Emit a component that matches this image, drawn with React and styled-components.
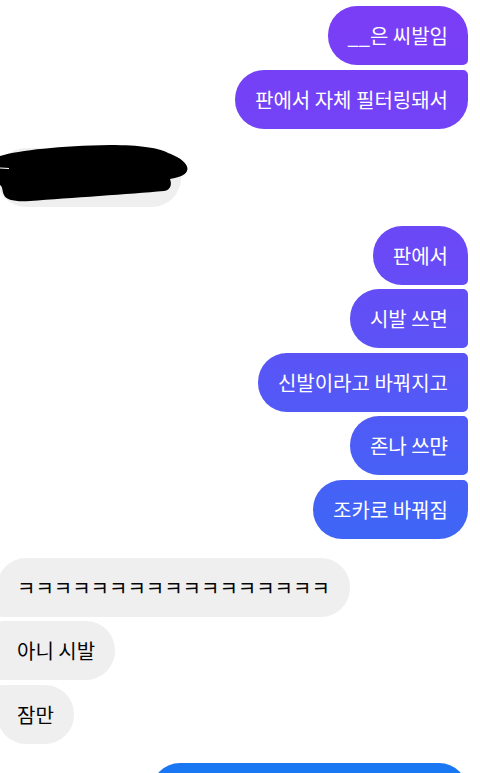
import React from 'react';
import styled, { createGlobalStyle } from 'styled-components';

const GlobalStyle = createGlobalStyle`
  html, body {
    margin: 0;
    padding: 0;
    background: #ffffff;
    overflow: hidden;
  }
  body {
    font-family: 'Noto Sans CJK KR', 'Noto Sans', sans-serif;
  }
`;

const BIG = 29;
const SMALL = 5;

const cornerRadius = ({ $side, $pos }) => {
  const top = $pos === 'first' || $pos === 'single' ? BIG : SMALL;
  const bottom = $pos === 'last' || $pos === 'single' ? BIG : SMALL;
  if ($side === 'me') return `${BIG}px ${top}px ${bottom}px ${BIG}px`;
  return `${top}px ${BIG}px ${BIG}px ${bottom}px`;
};

const Thread = styled.div`
  display: flex;
  flex-direction: column;
  gap: 19px;
  padding: 6px 12px 0 0;
`;

const Group = styled.div`
  position: relative;
  display: flex;
  flex-direction: column;
  gap: 4.5px;
  align-items: ${({ $side }) => ($side === 'me' ? 'flex-end' : 'flex-start')};
`;

const Bubble = styled.div`
  box-sizing: border-box;
  height: 59px;
  line-height: 59px;
  padding: 0 20px;
  font-size: 20px;
  white-space: nowrap;
  border-radius: ${cornerRadius};
  width: ${({ $width }) => ($width ? `${$width}px` : 'auto')};
  margin-left: ${({ $side }) => ($side === 'me' ? '0' : '-3px')};
  color: ${({ $side }) => ($side === 'me' ? '#ffffff' : '#050505')};
  background: ${({ $side }) =>
    $side === 'me'
      ? 'linear-gradient(180deg, #7b3df6 0px, #6a49f6 250px, #4463f6 500px, #1877f2 773px) fixed'
      : '#efefef'};
`;

const Scribble = styled.svg`
  position: absolute;
  top: -5px;
  left: 0;
  width: 195px;
  height: 62px;
`;

const Redacted = () => (
  <Scribble viewBox="0 0 195 62">
    <path
      fill="#000"
      d="M 0 13 C 20 7, 60 3, 110 2 C 140 2, 160 5, 168 10 C 180 14, 190 22, 187 28 C 185 33, 176 35, 170 36 C 172 41, 171 47, 164 48 C 130 51, 70 55, 30 58 C 15 59, 6 57, 4 52 C 2 48, 3 44, 0 42 Z"
    />
    <path fill="none" stroke="#fff" strokeWidth="1.2" d="M 0 25 L 9 25.5" />
  </Scribble>
);

const groups = [
  { side: 'me', items: ['__은 씨발임', '판에서 자체 필터링돼서'] },
  { side: 'them', items: [{ width: 184 }], redacted: true },
  {
    side: 'me',
    items: ['판에서', '시발 쓰면', '신발이라고 바꿔지고', '존나 쓰먄', '조카로 바꿔짐'],
  },
  { side: 'them', items: ['ㅋㅋㅋㅋㅋㅋㅋㅋㅋㅋㅋㅋㅋㅋㅋㅋㅋ', '아니 시발', '잠만'] },
  { side: 'me', items: [{ width: 317 }, { width: 200 }] },
];

const position = (i, n) => {
  if (n === 1) return 'single';
  if (i === 0) return 'first';
  if (i === n - 1) return 'last';
  return 'middle';
};

const App = () => (
  <>
    <GlobalStyle />
    <Thread>
      {groups.map((group, g) => (
        <Group key={g} $side={group.side}>
          {group.items.map((item, i) => (
            <Bubble
              key={i}
              $side={group.side}
              $pos={position(i, group.items.length)}
              $width={typeof item === 'object' ? item.width : undefined}
            >
              {typeof item === 'string' ? item : null}
            </Bubble>
          ))}
          {group.redacted && <Redacted />}
        </Group>
      ))}
    </Thread>
  </>
);

export default App;
